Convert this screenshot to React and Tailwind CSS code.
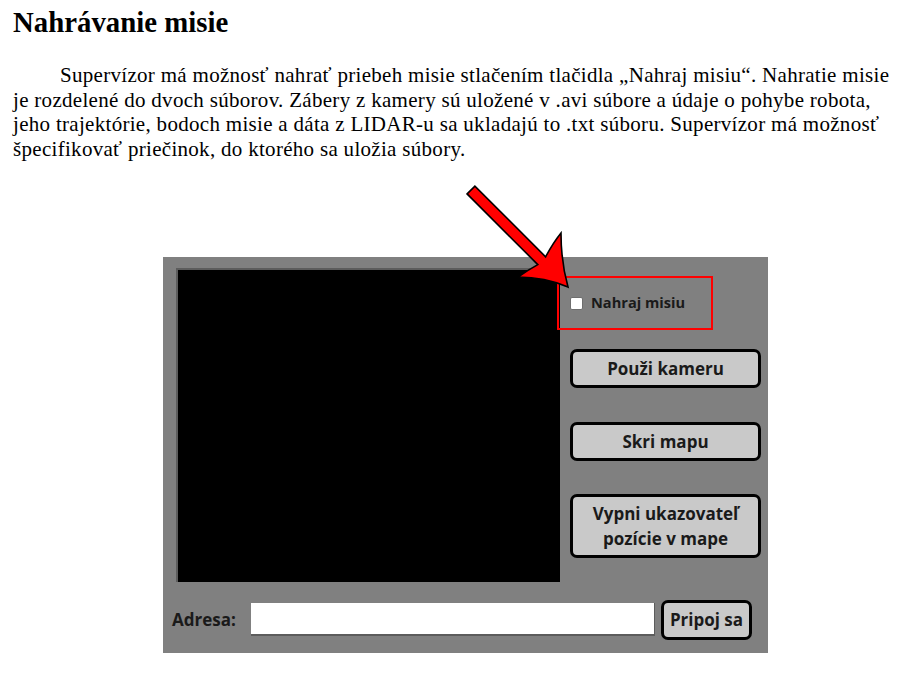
import React from 'react';

const serif = { fontFamily: '"Liberation Serif", "Times New Roman", serif' };
const ui = { fontFamily: '"Open Sans", "Noto Sans", sans-serif' };

const Btn = ({ children, className = '' }) => (
  <button
    style={ui}
    className={`w-[191px] border-[3px] border-black rounded-[7px] bg-[#c9c9c9] text-[#1a1a1a] font-bold text-[17px] leading-[25px] flex items-center justify-center text-center ${className}`}
  >
    {children}
  </button>
);

const Arrow = () => (
  <svg className="absolute left-0 top-0 pointer-events-none" width="909" height="687" viewBox="0 0 909 687">
    <path
      d="M467.1 193.9 L474.9 186.1 L545.6 256.8 Q553 243 561 233 Q561 262 568 287 Q545 277 518 277 Q528 270 537.8 264.6 Z"
      fill="#ff0000"
      stroke="#000"
      strokeWidth="1.6"
      strokeLinejoin="miter"
    />
  </svg>
);

export default function App() {
  return (
    <div className="relative w-[909px] h-[687px] bg-white text-black overflow-hidden">
      <h1 style={serif} className="pl-[13px] pt-[5px] text-[28.8px] leading-[34px] font-bold">
        Nahrávanie misie
      </h1>

      <div style={serif} className="mt-[24px] pl-[13px] text-[21px] tracking-[0.3px] leading-[24.7px]">
        <div className="pl-[47px] whitespace-nowrap">
          Supervízor má možnosť nahrať priebeh misie stlačením tlačidla „Nahraj misiu“. Nahratie misie
        </div>
        <div className="whitespace-nowrap">
          je rozdelené do dvoch súborov. Zábery z kamery sú uložené v .avi súbore a údaje o pohybe robota,
        </div>
        <div className="whitespace-nowrap">
          jeho trajektórie, bodoch misie a dáta z LIDAR-u sa ukladajú to .txt súboru. Supervízor má možnosť
        </div>
        <div className="whitespace-nowrap">
          špecifikovať priečinok, do ktorého sa uložia súbory.
        </div>
      </div>

      {/* application window */}
      <div className="relative ml-[163px] mt-[95px] w-[605px] h-[396px] bg-[#808080] flex flex-col">
        <div className="flex pt-[11px] pl-[13px]">
          <div className="w-[384px] h-[314px] bg-black border-t-2 border-l-2 border-[#5c5c5c]" />
          <div className="ml-[10px] w-[191px] flex flex-col">
            <label style={ui} className="mt-[29px] h-[13px] flex items-center gap-[8px] text-[14.6px] font-bold text-[#1a1a1a]">
              <span className="w-[13px] h-[13px] bg-white border border-[#6e6e6e] rounded-[2px] shrink-0" />
              Nahraj misiu
            </label>
            <Btn className="mt-[39px] h-[39px]">Použi kameru</Btn>
            <Btn className="mt-[34px] h-[39px]">Skri mapu</Btn>
            <Btn className="mt-[33px] h-[64px]">
              Vypni ukazovateľ
              <br />
              pozície v mape
            </Btn>
          </div>
        </div>

        <div className="flex items-center mt-[18px] h-[40px] pl-[9px]">
          <span style={ui} className="w-[79px] text-[17px] font-bold text-[#1a1a1a]">Adresa:</span>
          <div className="w-[404px] h-[33px] bg-white border-b-2 border-r border-[#5c5c5c]" />
          <button
            style={ui}
            className="ml-[6px] w-[91px] h-[40px] border-[3px] border-black rounded-[7px] bg-[#c9c9c9] text-[#1a1a1a] font-bold text-[17px] whitespace-nowrap"
          >
            Pripoj sa
          </button>
        </div>

        {/* annotation box */}
        <div className="absolute left-[394px] top-[19px] w-[156px] h-[54px] border-2 border-[#ff0000]" />
      </div>

      <Arrow />
    </div>
  );
}
